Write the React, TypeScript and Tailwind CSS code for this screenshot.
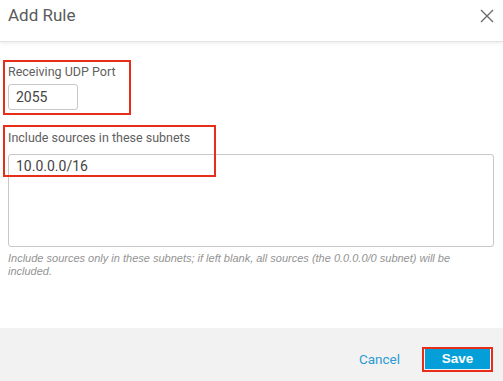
import React from "react";

const font = { fontFamily: "Roboto, 'Liberation Sans', Arial, sans-serif" };
const arial = { fontFamily: "'Liberation Sans', Arial, sans-serif" };

export default function App() {
  return (
    <div className="relative w-[503px] h-[381px] bg-white flex flex-col overflow-hidden" style={font}>
      {/* Header */}
      <div className="h-[42px] shrink-0 flex items-center justify-between pl-[8px] pr-[8px] border-b border-[#e3e3e3] shadow-[0_2px_3px_rgba(0,0,0,0.06)]">
        <span className="text-[17px] text-[#5a5a5a] leading-none -mt-[10px]">Add Rule</span>
        <svg width="14" height="14" viewBox="0 0 14 14" className="-mt-[10px] mr-[1px]">
          <path d="M1 1 L13 13 M13 1 L1 13" stroke="#6b6b6b" strokeWidth="1.4" fill="none" />
        </svg>
      </div>

      {/* Body */}
      <div className="flex-1 flex flex-col px-[8px] pt-[23px]">
        <label className="text-[12.5px] text-[#606060] leading-[14px]">Receiving UDP Port</label>
        <div className="mt-[5px] w-[70px] h-[26px] border border-[#c8c8c8] rounded-[3px] flex items-center px-[7px] text-[14px] font-normal text-[#444]">
          2055
        </div>

        <label className="mt-[21px] text-[12.5px] text-[#606060] leading-[14px]">Include sources in these subnets</label>
        <div className="mt-[9px] w-[486px] h-[93px] border border-[#c8c8c8] rounded-[3px] px-[7px] pt-[3px] text-[14px] font-normal text-[#444] leading-[16px]">
          10.0.0.0/16
        </div>

        <p className="mt-[5px] text-[11px] italic text-[#939393] leading-[13px] pr-[4px]" style={arial}>
          Include sources only in these subnets; if left blank, all sources (the 0.0.0.0/0 subnet) will be included.
        </p>
      </div>

      {/* Footer */}
      <div className="h-[53px] shrink-0 bg-[#f2f2f2] flex items-start justify-end pt-[21px] pr-[13px] gap-[25px]">
        <button className="text-[13.5px] text-[#2b9bd3] leading-[20px]">Cancel</button>
        <button className="w-[65px] h-[20px] bg-[#049fd9] text-white text-[13.5px] font-bold leading-none" style={arial}>
          Save
        </button>
      </div>

      {/* Annotation boxes */}
      <div className="absolute left-[3px] top-[60px] w-[128px] h-[55px] border-2 border-[#e62e1b] pointer-events-none" />
      <div className="absolute left-[3px] top-[125px] w-[213px] h-[52px] border-2 border-[#e62e1b] pointer-events-none" />
      <div className="absolute left-[422px] top-[347px] w-[71px] h-[25px] border-2 border-[#e62e1b] pointer-events-none" />
    </div>
  );
}
